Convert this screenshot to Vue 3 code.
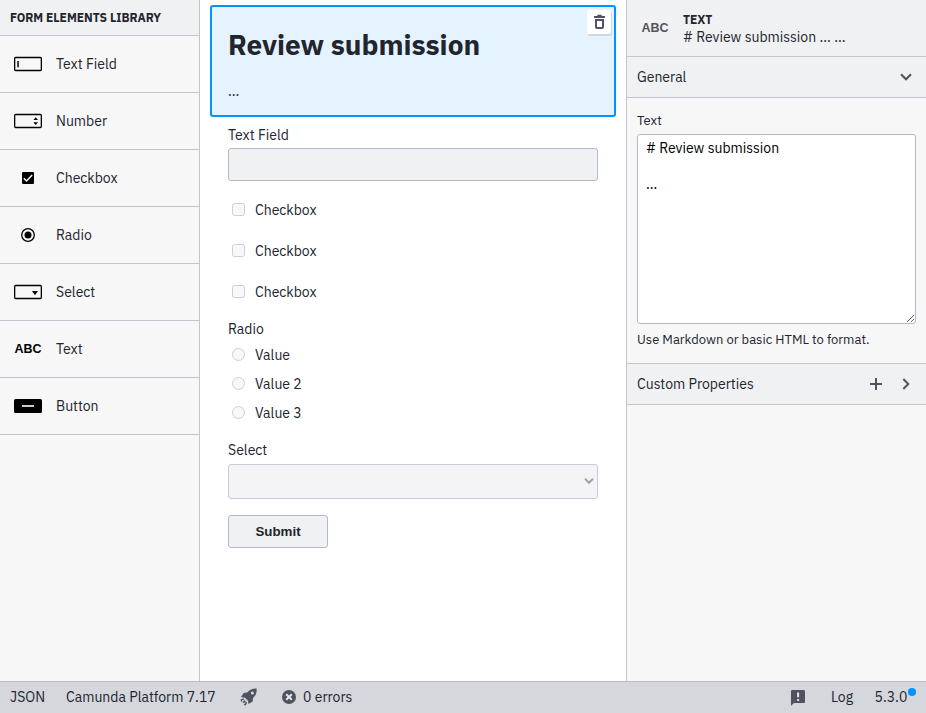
<script setup>
import { ref } from 'vue'

const elements = [
  { type: 'textfield', label: 'Text Field' },
  { type: 'number', label: 'Number' },
  { type: 'checkbox', label: 'Checkbox' },
  { type: 'radio', label: 'Radio' },
  { type: 'select', label: 'Select' },
  { type: 'text', label: 'Text' },
  { type: 'button', label: 'Button' },
]
const checkboxes = [1, 2, 3]
const radios = ['Value', 'Value 2', 'Value 3']
const source = ref('# Review submission\n\n...')
</script>

<template>
  <div class="app">
    <div class="workspace">
      <aside class="palette">
        <h2 class="palette-title">FORM ELEMENTS LIBRARY</h2>
        <div v-for="el in elements" :key="el.type" class="palette-item">
          <svg class="palette-icon" width="28" height="16" viewBox="0 0 28 16">
            <g v-if="['textfield', 'number', 'select'].includes(el.type)">
              <rect x=".65" y="1.5" width="26.7" height="13" rx="1" fill="none" stroke="#000" stroke-width="1.3" />
              <path v-if="el.type === 'textfield'" d="M3.2 5h1.7v6.2H3.2z" fill="#222" />
              <path v-if="el.type === 'number'" d="M19.4 7h4.6L21.7 4.3zM19.4 9.2h4.6l-2.3 2.7z" />
              <path v-if="el.type === 'select'" d="M18 7h6l-3 4.2z" />
            </g>
            <g v-else-if="el.type === 'checkbox'">
              <rect x="8" y="2" width="12" height="12" rx="1" />
              <path d="M9.8 8.2l2.7 2.7 5.7-5.8" fill="none" stroke="#fff" stroke-width="1.4" />
            </g>
            <g v-else-if="el.type === 'radio'">
              <circle cx="14" cy="8" r="6.3" fill="none" stroke="#000" stroke-width="1.3" />
              <circle cx="14" cy="8" r="3.5" />
            </g>
            <text v-else-if="el.type === 'text'" class="abc" x="0.6" y="12.3" textLength="27" lengthAdjust="spacingAndGlyphs">ABC</text>
            <g v-else>
              <rect y="1" width="28" height="14" rx="1.5" />
              <path d="M8 7h12v2H8z" fill="#ccc" />
            </g>
          </svg>
          <span>{{ el.label }}</span>
        </div>
      </aside>

      <main class="canvas">
        <section class="selected">
          <h1>Review submission</h1>
          <p>...</p>
          <button class="remove" aria-label="Remove">
            <svg width="14" height="16" viewBox="0 0 14 16">
              <path d="M2 3h11M5.3 1.6h4.4" stroke="#50535f" stroke-width="1.8" fill="none" />
              <path d="M4 6.1h7v6.9q0 1-1 1H5q-1 0-1-1z" stroke="#50535f" stroke-width="2" fill="none" />
            </svg>
          </button>
        </section>

        <div class="form">
          <div class="caption">Text Field</div>
          <div class="input"></div>
          <div class="checks">
            <div v-for="c in checkboxes" :key="c" class="check">
              <i class="box"></i><span>Checkbox</span>
            </div>
          </div>
          <div class="caption">Radio</div>
          <div class="radios">
            <div v-for="r in radios" :key="r" class="radio">
              <i class="box round"></i><span>{{ r }}</span>
            </div>
          </div>
          <div class="caption select-caption">Select</div>
          <div class="select">
            <svg width="10" height="8" viewBox="0 0 10 8">
              <path d="M1 1.8l4 4 4-4" fill="none" stroke="#a2a2a2" stroke-width="2" />
            </svg>
          </div>
          <button class="submit">Submit</button>
        </div>
      </main>

      <aside class="properties">
        <header class="prop-header">
          <svg width="28" height="16" viewBox="0 0 28 16">
            <text class="abc muted" x="0.5" y="12.4" textLength="27" lengthAdjust="spacingAndGlyphs">ABC</text>
          </svg>
          <div>
            <div class="prop-type">TEXT</div>
            <div class="prop-name"># Review submission ... ...</div>
          </div>
        </header>
        <div class="group">
          <span>General</span>
          <svg width="12" height="8" viewBox="0 0 12 8">
            <path d="M1 1.3l5 5 5-5" fill="none" stroke="#50535f" stroke-width="2" />
          </svg>
        </div>
        <div class="entry">
          <label>Text</label>
          <textarea v-model="source" spellcheck="false"></textarea>
          <p class="hint">Use Markdown or basic HTML to format.</p>
        </div>
        <div class="group">
          <span>Custom Properties</span>
          <svg class="plus" width="12" height="12" viewBox="0 0 12 12">
            <path d="M0 6h12M6 0v12" stroke="#50535f" stroke-width="2" />
          </svg>
          <svg class="right" width="8" height="12" viewBox="0 0 8 12">
            <path d="M1.3 1l5 5-5 5" fill="none" stroke="#50535f" stroke-width="2" />
          </svg>
        </div>
      </aside>
    </div>

    <footer class="status">
      <span class="s-json">JSON</span>
      <span class="s-platform">Camunda Platform 7.17</span>
      <svg class="rocket" width="17" height="18" viewBox="0 0 17 18">
        <path fill="#50535f" fill-rule="evenodd" d="M16.6.4c.4 4.300-.7 7.100-3.500 9.600l-.5 3.500-4.100 2.500-.5-3.300L5 9.700 1 9l2.700-4 3.500-.5C9.700 1.700 12.600.4 16.600.4zM12.400 3.600a1.500 1.500 0 1 0 0 3 1.500 1.500 0 0 0 0-3z" />
        <path d="M3.900 10.900l-2.500 1 .2 1.600M5.300 12.600l-2.200 2.200M6.500 14l-1.100 2.500-1.300-.1" fill="none" stroke="#50535f" stroke-width="1.5" />
      </svg>
      <svg class="error-icon" width="14" height="14" viewBox="0 0 14 14">
        <circle cx="7" cy="7" r="7" fill="#50535f" />
        <path d="M4.200 4.200l5.600 5.600M9.800 4.200L4.200 9.800" stroke="#e4e5e9" stroke-width="2" />
      </svg>
      <span>0 errors</span>
      <span class="spacer"></span>
      <svg class="feedback" width="14" height="16" viewBox="0 0 14 16">
        <path d="M1.300 0h11.400Q14 0 14 1.300v10.400Q14 13 12.700 13H3l-3 2.800V1.300Q0 0 1.300 0z" fill="#50535f" />
        <path d="M6.100 2.600h2v4.700h-2zM6.100 8.900h2v2h-2z" fill="#e4e5e9" />
      </svg>
      <span class="s-log">Log</span>
      <span class="version">5.3.0<i class="dot"></i></span>
    </footer>
  </div>
</template>

<style>
body { margin: 0; overflow: hidden; }
</style>

<style scoped>
* { box-sizing: border-box; }
.app {
  display: flex;
  flex-direction: column;
  height: 713px;
  font: 14px/18px "IBM Plex Sans", Roboto, "Liberation Sans", sans-serif;
  color: #22252d;
  background: #fff;
}
.workspace { flex: 1; min-height: 0; display: grid; grid-template-columns: 200px 1fr 300px; }
.palette { background: #f7f7f8; border-right: 1px solid #c3c4cc; }
.palette-title {
  margin: 0; height: 36px; padding-left: 10px; background: #f0f1f3;
  border-bottom: 1px solid #c3c4cc; font-size: 12px; line-height: 35px; font-weight: 700;
}
.palette-item {
  height: 57px; padding-left: 14px; display: flex; align-items: center; gap: 14px;
  border-bottom: 1px solid #c3c4cc;
}
.abc { font: bold 13px "Liberation Sans", sans-serif; fill: #000; }
.abc.muted { fill: #50535f; }

.canvas { padding: 5px 10px 0; }
.selected {
  position: relative; height: 112px; padding: 0 16px; border: 2px solid #0094ff;
  border-radius: 3px; background: #e5f3ff;
}
h1 { margin: 0; padding-top: 20px; font-size: 28px; line-height: 36px; font-weight: 700; white-space: nowrap; }
.selected p { margin: 19px 0 0; line-height: 18px; }
.remove {
  position: absolute; top: 3px; right: 3px; width: 24px; height: 24px; padding: 0; border: 0;
  border-radius: 2px; background: #fff; box-shadow: 1px 2px 0 #ccd9e4;
  display: flex; align-items: center; justify-content: center;
}
.form { padding: 9px 18px 0; }
.caption { height: 18px; }
.input { margin-top: 4px; height: 33px; border: 1px solid #b8b9c6; border-radius: 3px; background: #f0f1f3; }
.checks { padding-top: 20px; display: flex; flex-direction: column; gap: 23px; }
.check, .radio { height: 18px; padding-left: 4px; display: flex; align-items: center; gap: 10px; }
.box { width: 13px; height: 13px; margin-bottom: 1px; border: 1px solid #cfcfcf; border-radius: 2.5px; background: #f8f8f8; }
.box.round { border-radius: 50%; }
.checks + .caption { margin-top: 19px; }
.radios { padding-top: 8px; display: flex; flex-direction: column; gap: 11px; }
.select-caption { margin-top: 19px; }
.select {
  margin-top: 5px; height: 35px; padding: 0 3px 1px 0; display: flex; align-items: center; justify-content: flex-end;
  border: 1px solid #cbccd7; border-radius: 3px; background: #f4f4f7;
}
.submit {
  display: block; margin-top: 16px; width: 100px; height: 33px; padding: 0; border: 1px solid #b8b9c6;
  border-radius: 3px; background: #f0f1f3; color: #22252d; font: bold 13.33px "Liberation Sans", sans-serif;
}

.properties { background: #f7f7f8; border-left: 1px solid #c3c4cc; }
.prop-header {
  height: 57px; padding: 0 14px; display: flex; align-items: center; gap: 14px;
  background: #f0f1f3; border-bottom: 1px solid #c3c4cc;
}
.prop-type { font-size: 12px; line-height: 17px; font-weight: 700; }
.prop-name { line-height: 18px; }
.group {
  height: 41px; padding: 0 14px 0 10px; display: flex; align-items: center;
  background: #f0f1f3; border-bottom: 1px solid #c3c4cc;
}
.group > span { flex: 1; }
.plus { margin-right: 20px; }
.right { margin-right: 2px; }
.entry { height: 266px; padding: 14px 10px 0; border-bottom: 1px solid #c3c4cc; }
.entry label { display: block; font-size: 13px; line-height: 18px; }
textarea {
  display: block; width: 279px; height: 190px; margin-top: 4px; padding: 4px 8px; border: 1px solid #b8b9c6;
  border-radius: 3px; outline: 0; background: #fff; color: #000; font: inherit; line-height: normal; resize: both;
}
.hint { margin: 7px 0 0; font-size: 13px; line-height: 18px; white-space: nowrap; }

.status {
  height: 32px; display: flex; align-items: center; padding: 0 10px 2px;
  background: #d5d7dd; border-top: 1px solid #b8bac4; white-space: nowrap;
}
.s-json { width: 56px; }
.s-platform { width: 174px; }
.error-icon { margin: 1px 7px 0 25px; }
.spacer { flex: 1; }
.feedback { margin: 3px 26px 0 0; }
.s-log { width: 43.5px; }
.version { position: relative; width: 41.5px; }
.dot { position: absolute; top: 0; right: 0; width: 8px; height: 8px; border-radius: 50%; background: #0094ff; }
</style>
